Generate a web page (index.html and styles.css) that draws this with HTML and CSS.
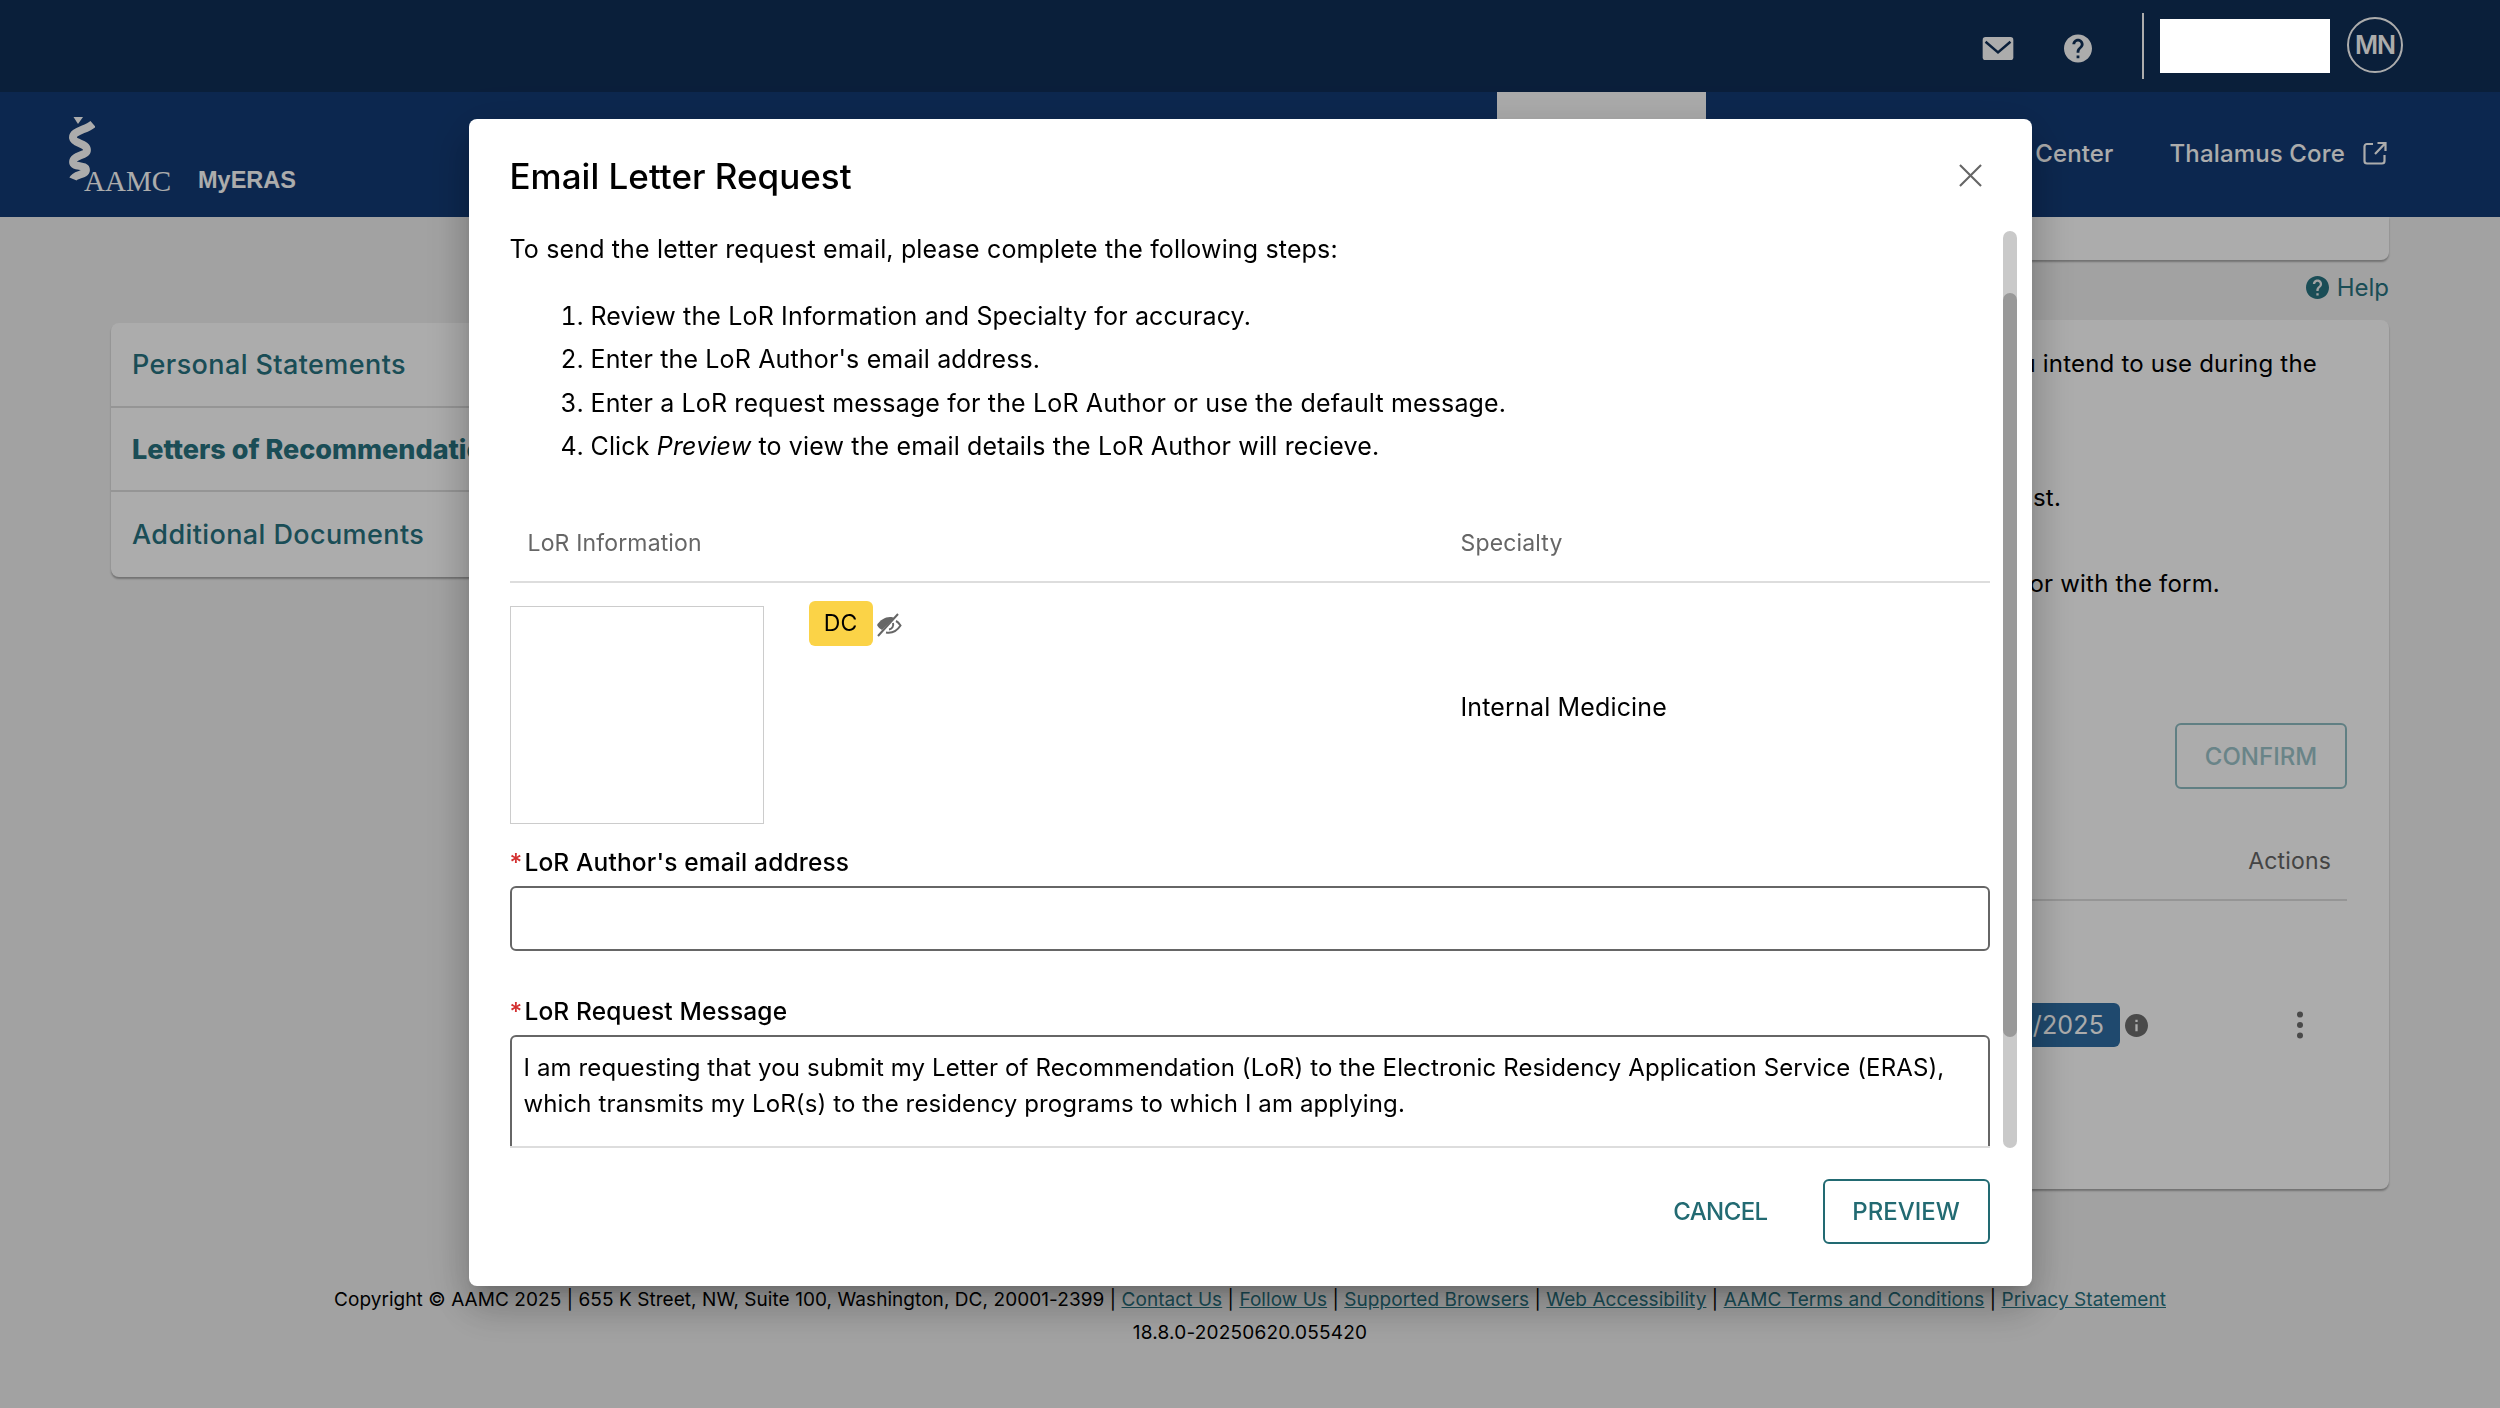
FILE: index.html
```html
<!DOCTYPE html>
<html lang="en">
  <head>
    <meta charset="UTF-8" />
    <title>MyERAS - Email Letter Request</title>
    <link rel="stylesheet" href="styles.css">
  </head>
  <body>
    <header class="topbar">
      <svg class="top-icon mail" viewBox="0 0 32 24"><rect width="32" height="24" rx="3" fill="#fff"/><path d="M3 5l13 11L29 5" fill="none" stroke="#0f2e57" stroke-width="2.6"/></svg>
      <svg class="top-icon help" viewBox="2 2 20 20"><path fill="#fff" d="M12 2C6.48 2 2 6.48 2 12s4.48 10 10 10 10-4.48 10-10S17.52 2 12 2zm1 17h-2v-2h2v2zm2.07-7.75l-.9.92C13.45 12.9 13 13.5 13 15h-2v-.5c0-1.1.45-2.1 1.17-2.83l1.24-1.26c.37-.36.59-.86.59-1.41 0-1.1-.9-2-2-2s-2 .9-2 2H8c0-2.21 1.79-4 4-4s4 1.79 4 4c0 .88-.36 1.68-.93 2.25z"/></svg>
      <span class="top-divider"></span>
      <span class="name-box"></span>
      <span class="avatar">MN</span>
    </header>

    <nav class="navbar">
      <div class="logo">
        <svg class="logo-mark" viewBox="0 0 26 64">
          <path d="M4.5 0h9.5L9 7z" fill="#fff"/>
          <path d="M24 7C17 13 3 14 4 21C5 27 18 26 18 33C18 39 4 38 4 45C4 51 17 47 17 53C17 58 6 57 4 62" fill="none" stroke="#fff" stroke-width="7.8" stroke-linejoin="round"/>
        </svg>
        <span class="logo-aamc">AAMC</span>
        <span class="logo-app">MyERAS</span>
      </div>
      <span class="nav-hidden"></span>
      <a class="nav-link nav-center">Help Center</a>
      <a class="nav-link">Thalamus Core</a>
      <svg class="nav-ext" viewBox="0 0 24 24" fill="none" stroke="#fff" stroke-width="2.2"><path d="M10 3H4a2.5 2.5 0 0 0-2.5 2.5V20A2.5 2.5 0 0 0 4 22.5h15a2.5 2.5 0 0 0 2.5-2.5v-6"/><path d="M12 13L22 2.5M14.5 2h8v8" /></svg>
    </nav>

    <div class="page">
      <aside class="sidebar">
        <a class="side-item">Personal Statements</a>
        <a class="side-item side-active">Letters of Recommendations</a>
        <a class="side-item">Additional Documents</a>
      </aside>
      <main class="content">
        <div class="top-card"></div>
        <div class="help-line">
          <svg class="help-icon" viewBox="2 2 20 20"><path fill="#277280" d="M12 2C6.48 2 2 6.48 2 12s4.48 10 10 10 10-4.48 10-10S17.52 2 12 2zm1 17h-2v-2h2v2zm2.07-7.75l-.9.92C13.45 12.9 13 13.5 13 15h-2v-.5c0-1.1.45-2.1 1.17-2.83l1.24-1.26c.37-.36.59-.86.59-1.41 0-1.1-.9-2-2-2s-2 .9-2 2H8c0-2.21 1.79-4 4-4s4 1.79 4 4c0 .88-.36 1.68-.93 2.25z"/></svg>
          <a>Help</a>
        </div>
        <section class="lor-card">
          <p class="lor-text first">Select the Letter of Recommendation you intend to use during the</p>
          <p class="lor-text second">Add each author to your list.</p>
          <p class="lor-text third">Contact the author with the form.</p>
          <div class="confirm-row"><button class="btn-confirm">CONFIRM</button></div>
          <div class="table-head"><span>Actions</span></div>
          <div class="table-row">
            <span class="date-pill">06/20/2025</span>
            <svg class="info-icon" viewBox="2 2 20 20"><path fill="#6e6e6e" d="M12 2C6.48 2 2 6.48 2 12s4.48 10 10 10 10-4.48 10-10S17.52 2 12 2zm1 15h-2v-6h2v6zm0-8h-2V7h2v2z"/></svg>
            <svg class="dots" viewBox="0 0 8 28"><circle cx="4" cy="3.5" r="3" /><circle cx="4" cy="14" r="3" /><circle cx="4" cy="24.5" r="3" /></svg>
          </div>
        </section>
      </main>
    </div>

    <footer class="footer">
      <p>Copyright © AAMC 2025 | 655 K Street, NW, Suite 100, Washington, DC, 20001-2399 | <a>Contact Us</a> | <a>Follow Us</a> | <a>Supported Browsers</a> | <a>Web Accessibility</a> | <a>AAMC Terms and Conditions</a> | <a>Privacy Statement</a></p>
      <p class="version">18.8.0-20250620.055420</p>
    </footer>

    <div class="overlay">
      <div class="modal">
        <div class="modal-head">
          <h2>Email Letter Request</h2>
          <svg class="modal-close" viewBox="0 0 24 24" stroke="#666" stroke-width="2.2"><path d="M1 1l22 22M23 1L1 23"/></svg>
        </div>
        <div class="modal-body">
          <p class="intro">To send the letter request email, please complete the following steps:</p>
          <ol class="steps">
            <li>Review the LoR Information and Specialty for accuracy.</li>
            <li>Enter the LoR Author's email address.</li>
            <li>Enter a LoR request message for the LoR Author or use the default message.</li>
            <li>Click <em>Preview</em> to view the email details the LoR Author will recieve.</li>
          </ol>
          <div class="lor-head">
            <span class="col-info">LoR Information</span>
            <span>Specialty</span>
          </div>
          <div class="lor-row">
            <div class="thumb"></div>
            <div class="tag-cell">
              <span class="tag">DC</span>
              <svg class="eye-off" viewBox="0 0 26 24"><path fill="#666" d="M1 12C4 7 9 4 14 4c2 0 3 .4 4 1L6 17c-2-1-4-3-5-5z"/><path fill="none" stroke="#666" stroke-width="2" d="M2 23L22 1M20 8c2 1 3.5 3 4.5 4.5C21 18 16 20.5 10 19.5M17 10c1 3-1 6-4 6.5"/></svg>
            </div>
            <div class="specialty">Internal Medicine</div>
          </div>
          <label class="field-label" for="authorEmail"><span class="req">*</span>LoR Author's email address</label>
          <input class="field-input" id="authorEmail" type="text" />
          <label class="field-label second-label" for="lorMessage"><span class="req">*</span>LoR Request Message</label>
          <textarea class="field-area" id="lorMessage">I am requesting that you submit my Letter of Recommendation (LoR) to the Electronic Residency Application Service (ERAS), which transmits my LoR(s) to the residency programs to which I am applying.</textarea>
        </div>
        <div class="modal-actions">
          <button class="btn-cancel">CANCEL</button>
          <button class="btn-preview">PREVIEW</button>
        </div>
        <div class="scroll-track"><div class="scroll-thumb"></div></div>
      </div>
    </div>
  </body>
</html>
```

FILE: styles.css
```css
* {
  margin: 0;
  padding: 0;
  box-sizing: border-box;
}

body {
  width: 2500px;
  height: 1408px;
  overflow: hidden;
  background-color: #f1f1f1;
  color: #000;
  font-family: Inter, "Liberation Sans", sans-serif;
  font-size: 25px;
  letter-spacing: 0.15px;
}

/* top dark bar */
.topbar {
  height: 92px;
  background-color: #0f2e57;
  display: flex;
  align-items: center;
  padding-right: 97px;
  justify-content: flex-end;
}

.top-icon.mail {
  width: 32px;
  height: 23px;
  margin-top: 5px;
  margin-right: 50px;
}

.top-icon.help {
  width: 28px;
  height: 29px;
  margin-top: 5px;
  margin-right: 50px;
}

.top-divider {
  width: 2px;
  height: 66px;
  background-color: #fff;
  margin-right: 16px;
}

.name-box {
  width: 170px;
  height: 54px;
  margin-top: -1px;
  margin-right: 17px;
  background-color: #fff;
  position: relative;
  z-index: 20;
}

.avatar {
  width: 56px;
  height: 56px;
  margin-top: -2px;
  border: 2px solid #fff;
  border-radius: 50%;
  color: #fff;
  font-size: 25px;
  font-weight: 600;
  letter-spacing: -1px;
  display: flex;
  align-items: center;
  justify-content: center;
}

/* blue nav */
.navbar {
  height: 125px;
  background-color: #133b76;
  color: #fff;
  display: flex;
  align-items: center;
  padding-left: 69px;
  padding-right: 113px;
}

.logo {
  display: flex;
  align-items: flex-end;
  height: 74px;
  margin-top: 2px;
}

.logo-mark {
  width: 26px;
  height: 64px;
  margin-bottom: 12px;
}

.logo-aamc {
  font-family: "Liberation Serif", serif;
  font-size: 29px;
  line-height: 24px;
  letter-spacing: 0;
  margin-left: -11px;
  margin-right: 27px;
}

.logo-app {
  font-family: "Liberation Sans", sans-serif;
  font-size: 23.5px;
  font-weight: 700;
  line-height: 26px;
  letter-spacing: 0;
}

.nav-hidden {
  width: 209px;
  align-self: stretch;
  background-color: #fff;
  margin-left: 1201px;
}

.nav-link {
  font-size: 24px;
  font-weight: 500;
  margin-top: -2px;
}

.nav-center {
  margin-left: auto;
  margin-right: 56px;
}

.nav-ext {
  width: 24px;
  height: 24px;
  margin-left: 18px;
  margin-top: -4px;
}

/* page behind the modal */
.page {
  display: flex;
  gap: 20px;
  padding-left: 111px;
  padding-right: 111px;
}

.sidebar {
  width: 430px;
  height: 254px;
  margin-top: 106px;
  background-color: #fff;
  border-radius: 8px;
  box-shadow: 0 2px 2px rgba(0, 0, 0, 0.3);
  display: flex;
  flex-direction: column;
  flex-shrink: 0;
  overflow: hidden;
  white-space: nowrap;
}

.side-item {
  height: 85px;
  padding-left: 21px;
  display: flex;
  align-items: center;
  color: #277280;
  font-size: 27px;
  font-weight: 500;
  letter-spacing: 0.4px;
  border-bottom: 2px solid #ddd;
}

.side-item:last-child {
  border-bottom: none;
}

.side-active {
  font-weight: 800;
  letter-spacing: 0;
}

.content {
  flex: 1;
}

.top-card {
  height: 43px;
  background-color: #fff;
  border-radius: 0 0 8px 8px;
  box-shadow: 0 2px 2px rgba(0, 0, 0, 0.3);
}

.help-line {
  height: 60px;
  display: flex;
  align-items: center;
  justify-content: flex-end;
  color: #277280;
  font-size: 24px;
  letter-spacing: 0;
  gap: 8px;
  padding-bottom: 6px;
}

.help-icon {
  width: 23px;
  height: 23px;
}

.lor-card {
  height: 869px;
  background-color: #fff;
  border-radius: 8px;
  box-shadow: 0 2px 2px rgba(0, 0, 0, 0.3);
  padding-right: 42px;
  display: flex;
  flex-direction: column;
}

.lor-text {
  text-align: right;
  white-space: nowrap;
  font-size: 24px;
  letter-spacing: 0.2px;
  line-height: 30px;
}

.lor-text.first {
  margin-top: 29px;
  margin-right: 30px;
}

.lor-text.second {
  margin-top: 104px;
  margin-right: 286px;
}

.lor-text.third {
  margin-top: 56px;
  margin-right: 127px;
}

.confirm-row {
  display: flex;
  justify-content: flex-end;
  margin-top: 124px;
}

.btn-confirm {
  width: 172px;
  height: 66px;
  border: 2px solid #8fbcc2;
  border-radius: 6px;
  background-color: #fff;
  color: #9cc4ca;
  font-family: inherit;
  font-size: 24px;
  font-weight: 500;
}

.table-head {
  height: 112px;
  border-bottom: 2px solid #ddd;
  display: flex;
  justify-content: flex-end;
  align-items: center;
  padding-right: 16px;
  padding-top: 34px;
  font-size: 23px;
  color: #666;
}

.table-row {
  display: flex;
  align-items: center;
  margin-top: 102px;
}

.date-pill {
  margin-left: 1359px;
  width: 200px;
  height: 44px;
  background-color: #2e6da3;
  color: #fff;
  border-radius: 6px;
  display: flex;
  align-items: center;
  justify-content: flex-end;
  padding-right: 16px;
}

.info-icon {
  width: 23px;
  height: 23px;
  margin-left: 5px;
}

.dots {
  width: 8px;
  height: 28px;
  margin-left: auto;
  margin-right: 43px;
  fill: #6e6e6e;
}

/* footer */
.footer {
  margin-top: 94px;
  text-align: center;
  font-size: 19px;
  letter-spacing: 0.06px;
  line-height: 33px;
}

.footer a {
  color: #277280;
  text-decoration: underline;
}

.version {
  letter-spacing: 0.2px;
}

/* modal */
.overlay {
  position: fixed;
  inset: 0;
  z-index: 10;
  background-color: rgba(0, 0, 0, 0.325);
  display: flex;
  justify-content: center;
  align-items: flex-start;
  padding-top: 119px;
}

.modal {
  position: relative;
  width: 1563px;
  height: 1167px;
  background-color: #fff;
  border-radius: 8px;
  box-shadow: 0 11px 15px -7px rgba(0, 0, 0, 0.2), 0 24px 38px 3px rgba(0, 0, 0, 0.14), 0 9px 46px 8px rgba(0, 0, 0, 0.12);
  display: flex;
  flex-direction: column;
  padding: 0 42px 0 41px;
}

.modal-head {
  height: 112px;
  display: flex;
  align-items: center;
  justify-content: space-between;
  flex-shrink: 0;
}

.modal-head h2 {
  font-size: 35px;
  font-weight: 500;
  letter-spacing: 0;
  margin-top: 1px;
}

.modal-close {
  width: 23px;
  height: 23px;
  margin-right: 8px;
}

.modal-body {
  height: 917px;
  flex-shrink: 0;
  overflow: hidden;
  border-bottom: 2px solid #ddd;
}

.intro {
  line-height: 30px;
  margin-top: 3px;
}

.steps {
  margin-top: 31px;
  padding-left: 81px;
  line-height: 43.4px;
}

.lor-head {
  display: flex;
  margin-top: 58px;
  height: 56px;
  border-bottom: 2px solid #ddd;
  color: #666;
  font-size: 23px;
  padding-left: 18px;
  padding-top: 2px;
}

.col-info {
  width: 933px;
}

.lor-row {
  display: flex;
  margin-top: 23px;
}

.thumb {
  width: 254px;
  height: 218px;
  border: 1px solid #ccc;
}

.tag-cell {
  width: 652px;
  padding-left: 45px;
  display: flex;
  align-items: flex-start;
  margin-top: -5px;
}

.tag {
  width: 64px;
  height: 45px;
  background-color: #fbd347;
  border-radius: 6px;
  display: flex;
  align-items: center;
  justify-content: center;
  font-size: 23px;
}

.eye-off {
  width: 26px;
  height: 24px;
  margin-left: 3px;
  margin-top: 12px;
}

.specialty {
  align-self: center;
  margin-left: 45px;
  margin-bottom: 16px;
}

.field-label {
  display: block;
  line-height: 30px;
  margin-top: 23px;
  font-size: 24.5px;
  font-weight: 500;
}

.second-label {
  margin-top: 45px;
}

.req {
  color: #d32f2f;
  margin-right: 2px;
}

.field-input {
  display: block;
  width: 100%;
  height: 65px;
  margin-top: 9px;
  border: 2px solid #666;
  border-radius: 6px;
  outline: none;
}

.field-area {
  display: block;
  width: 100%;
  height: 200px;
  margin-top: 9px;
  padding: 13px 12px;
  border: 2px solid #666;
  border-radius: 6px;
  font-family: inherit;
  font-size: 24px;
  letter-spacing: 0.12px;
  line-height: 36px;
  resize: none;
  outline: none;
}

.modal-actions {
  display: flex;
  justify-content: flex-end;
  align-items: flex-start;
  gap: 55px;
  padding-top: 31px;
}

.btn-cancel {
  height: 65px;
  border: none;
  background: none;
  color: #226a72;
  font-family: inherit;
  font-size: 24px;
  font-weight: 500;
  letter-spacing: -0.6px;
}

.btn-preview {
  width: 167px;
  height: 65px;
  border: 2px solid #226a72;
  border-radius: 6px;
  background: none;
  color: #226a72;
  font-family: inherit;
  font-size: 24px;
  font-weight: 500;
}

.scroll-track {
  position: absolute;
  right: 15px;
  top: 112px;
  width: 14px;
  height: 917px;
  border-radius: 7px;
  background-color: #c9c9c9;
}

.scroll-thumb {
  height: 744px;
  margin-top: 62px;
  border-radius: 7px;
  background-color: #999;
}
```
